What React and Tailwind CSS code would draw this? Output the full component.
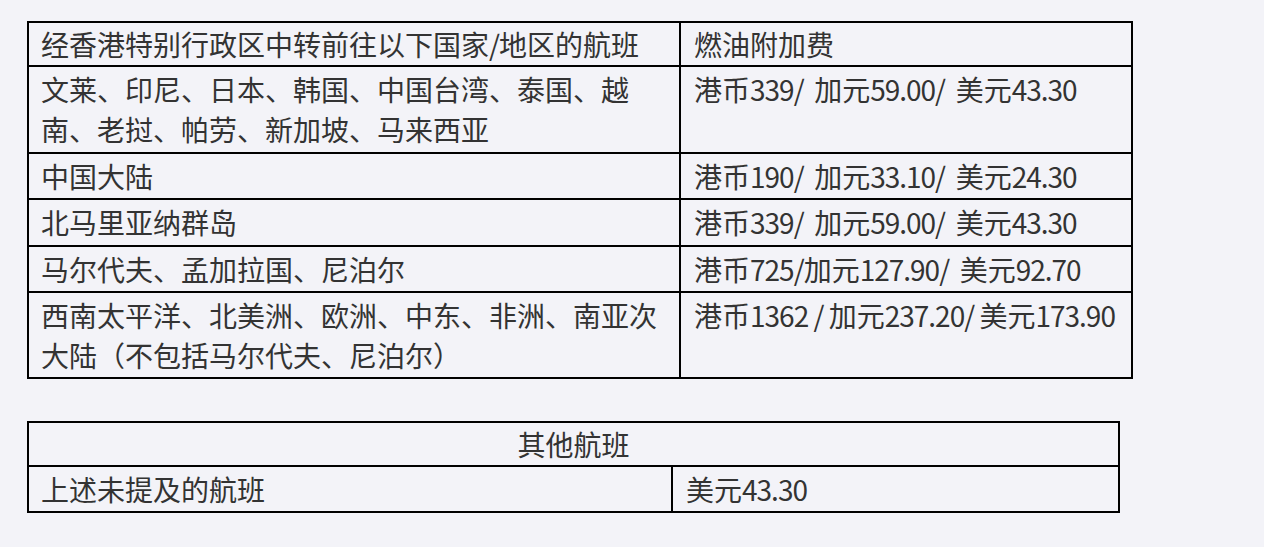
import React from "react";

const font = { fontFamily: '"Noto Sans CJK SC", "Noto Sans", sans-serif' };

function Mixed({ text }) {
  const parts = text.split(/([\u0020-\u007e]+)/).filter((p) => p.length);
  return (
    <>
      {parts.map((p, i) =>
        /^[\u0020-\u007e]+$/.test(p) ? (
          <span key={i} className="tracking-[-1px]">
            {p}
          </span>
        ) : (
          <span key={i}>{p}</span>
        )
      )}
    </>
  );
}

const rows = [
  { h: "h-[87px]", l: "文莱、印尼、日本、韩国、中国台湾、泰国、越南、老挝、帕劳、新加坡、马来西亚", r: "港币339/  加元59.00/  美元43.30" },
  { h: "h-[46px]", l: "中国大陆", r: "港币190/  加元33.10/  美元24.30" },
  { h: "h-[47px]", l: "北马里亚纳群岛", r: "港币339/  加元59.00/  美元43.30" },
  { h: "h-[46px]", l: "马尔代夫、孟加拉国、尼泊尔", r: "港币725/加元127.90/  美元92.70" },
  { h: "h-[86px]", l: "西南太平洋、北美洲、欧洲、中东、非洲、南亚次大陆（不包括马尔代夫、尼泊尔）", r: "港币1362 / 加元237.20/ 美元173.90" },
];

export default function App() {
  return (
    <div
      className="w-full h-[547px] bg-[#f3f3f8] pl-[27px] pt-[21px] text-[28px] leading-[40px] text-[#333333]"
      style={font}
    >
      <div className="w-[1106px] border-2 border-black flex flex-col">
        <div className="flex h-[42px]">
          <div className="w-[652px] shrink-0 border-r-2 border-black pl-[12px] pr-[14px] pt-px">
            <Mixed text="经香港特别行政区中转前往以下国家/地区的航班" />
          </div>
          <div className="flex-1 pl-[13px] pt-px">燃油附加费</div>
        </div>
        {rows.map((row, i) => (
          <div key={i} className={`flex border-t-2 border-black ${row.h}`}>
            <div className="w-[652px] shrink-0 border-r-2 border-black pl-[12px] pr-[14px] pt-[2px]">
              {row.l}
            </div>
            <div className="flex-1 pl-[13px] pt-[2px] whitespace-pre">
              <Mixed text={row.r} />
            </div>
          </div>
        ))}
      </div>

      <div className="mt-[42px] w-[1093px] border-2 border-black flex flex-col">
        <div className="h-[42px] text-center pt-px">其他航班</div>
        <div className="flex h-[46px] border-t-2 border-black">
          <div className="w-[644px] shrink-0 border-r-2 border-black pl-[12px] pt-[2px]">
            上述未提及的航班
          </div>
          <div className="flex-1 pl-[13px] pt-[2px]">
            <Mixed text="美元43.30" />
          </div>
        </div>
      </div>
    </div>
  );
}
